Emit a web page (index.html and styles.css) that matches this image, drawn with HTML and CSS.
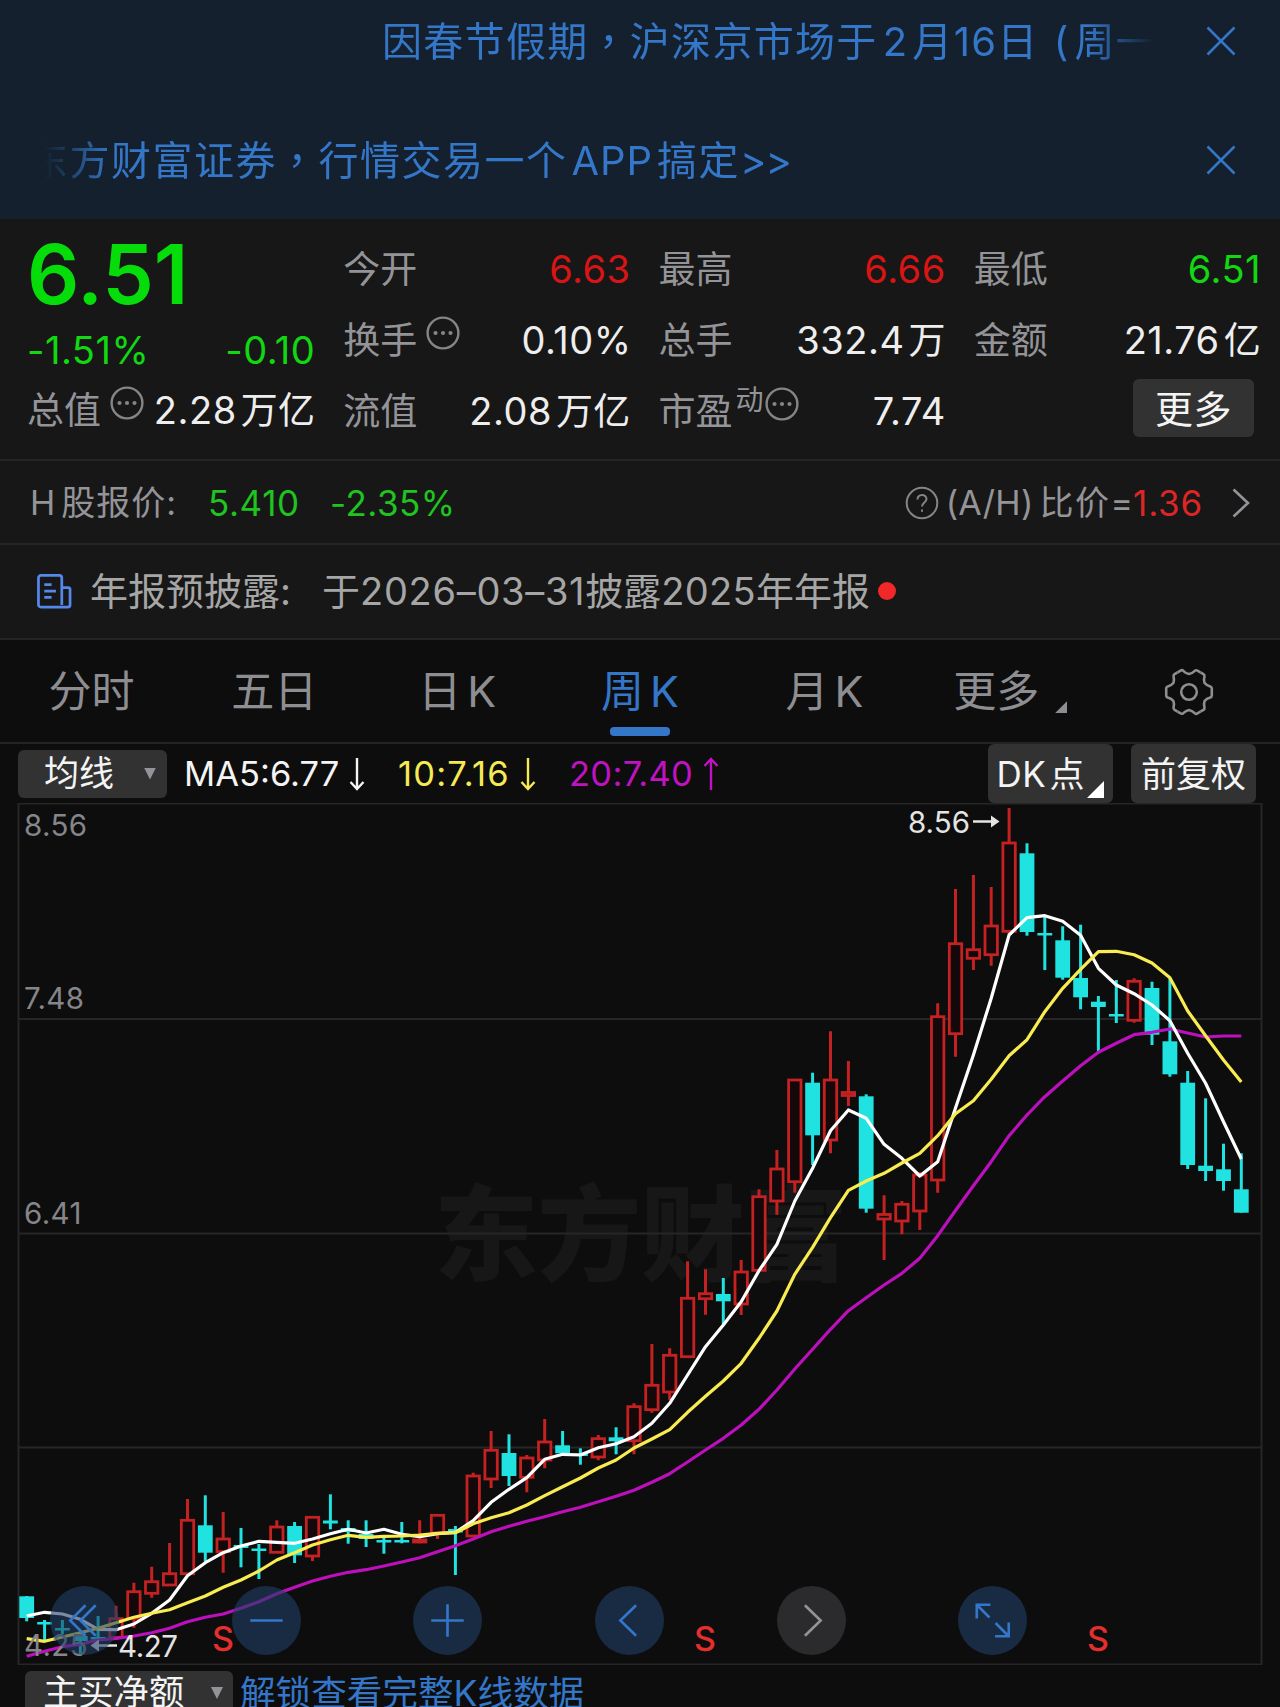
FILE: index.html
```html
<!DOCTYPE html>
<html lang="zh-CN">
<head>
<meta charset="utf-8">
<title>周K行情</title>
<link rel="stylesheet" href="styles.css">
</head>
<body>
<header class="notices">
  <div class="notice">
    <div class="notice-view fade-right"><p class="notice-text first">因春节假期<span class="tc" lang="zh-TW">，</span>沪深京市场于<span class="n1">2</span>月<span class="n2">16</span>日<span class="n3">(</span>周一</p></div>
    <svg class="close" viewBox="0 0 30 30"><path d="M1.5 1.5 28.500 28.500M28.500 1.500 1.500 28.500"/></svg>
  </div>
  <div class="notice second-row">
    <div class="notice-view fade-left"><p class="notice-text second">东方财富证券<span class="tc" lang="zh-TW">，</span>行情交易一个<span class="app">APP</span>搞定<span class="gt">&gt;&gt;</span></p></div>
    <svg class="close" viewBox="0 0 30 30"><path d="M1.500 1.500 28.500 28.500M28.500 1.500 1.500 28.500"/></svg>
  </div>
</header>

<section class="quote">
  <div class="col lead">
    <div class="price">6.51</div>
    <div class="cell change"><span class="value down">-1.51%</span><span class="value down">-0.10</span></div>
    <div class="cell"><span class="label">总值</span><svg class="dots" viewBox="0 0 34 34"><circle class="ring" cx="17" cy="17" r="15.400"/><circle cx="9.500" cy="17" r="2.100"/><circle cx="17" cy="17" r="2.100"/><circle cx="24.500" cy="17" r="2.100"/></svg><span class="value">2.28<i>万亿</i></span></div>
  </div>
  <div class="col">
    <div class="cell"><span class="label">今开</span><span class="value up">6.63</span></div>
    <div class="cell"><span class="label">换手</span><svg class="dots" viewBox="0 0 34 34"><circle class="ring" cx="17" cy="17" r="15.400"/><circle cx="9.500" cy="17" r="2.100"/><circle cx="17" cy="17" r="2.100"/><circle cx="24.500" cy="17" r="2.100"/></svg><span class="value percent">0.10%</span></div>
    <div class="cell"><span class="label">流值</span><span class="value">2.08<i>万亿</i></span></div>
  </div>
  <div class="col">
    <div class="cell"><span class="label">最高</span><span class="value up">6.66</span></div>
    <div class="cell"><span class="label">总手</span><span class="value">332.4<i>万</i></span></div>
    <div class="cell"><span class="label">市盈</span><span class="sup">动</span><svg class="dots tight" viewBox="0 0 34 34"><circle class="ring" cx="17" cy="17" r="15.400"/><circle cx="9.500" cy="17" r="2.100"/><circle cx="17" cy="17" r="2.100"/><circle cx="24.500" cy="17" r="2.100"/></svg><span class="value">7.74</span></div>
  </div>
  <div class="col">
    <div class="cell"><span class="label">最低</span><span class="value down">6.51</span></div>
    <div class="cell"><span class="label">金额</span><span class="value">21.76<i>亿</i></span></div>
    <div class="cell"><button class="more">更多</button></div>
  </div>
</section>

<section class="hshare">
  <span class="h-label"><b>H</b>股报价:</span>
  <span class="h-price">5.410</span>
  <span class="h-change">-2.35%</span>
  <span class="ratio"><svg class="question" viewBox="0 0 34 34"><circle cx="17" cy="17" r="15.300"/><path d="M12.500 13.500c0-6 9-6 9-.5 0 3.500-4.500 3.500-4.500 7.500M17 23.500v2.200"/></svg><span class="ah">(A/H)</span><span class="bj">比价</span><span class="eq">=</span><span class="ratio-value">1.36</span></span>
  <svg class="chevron" viewBox="0 0 18 30"><path d="M1.500 1.500 16 15 1.500 28.500"/></svg>
</section>

<section class="disclosure">
  <svg class="doc" viewBox="0 0 36 36"><path d="M26 34H4a2.500 2.500 0 0 1-2.500-2.500V4A2.500 2.500 0 0 1 4 1.500h19A2.500 2.500 0 0 1 25.500 4v28M25.500 14h6.500a2 2 0 0 1 2 2v15.500A2.500 2.500 0 0 1 31.500 34H25M7.500 11h7.500M7.500 17.500h12M7.500 24h7.500"/></svg>
  <span class="d-title">年报预披露:</span>
  <span class="d-text">于<span class="date">2026–03–31</span>披露<span class="year">2025</span>年年报</span>
  <span class="red-dot"></span>
</section>

<nav class="tabs">
  <a class="tab">分时</a>
  <a class="tab">五日</a>
  <a class="tab">日<b>K</b></a>
  <a class="tab active">周<b>K</b></a>
  <a class="tab month">月<b>K</b></a>
  <a class="tab wide">更多<span class="corner"></span></a>
  <a class="tab"><svg class="gear" viewBox="-25 -25 50 50"><defs><path id="tooth" d="M22.800 0V3.500Q22.800 5 21.200 5.600Q17.500 6.600 15.600 9Q14.500 11.800 15.450 15.600Q15.700 17.200 14.400 18L11.400 19.700"/></defs><use href="#tooth"/><use href="#tooth" transform="rotate(60)"/><use href="#tooth" transform="rotate(120)"/><use href="#tooth" transform="rotate(180)"/><use href="#tooth" transform="rotate(240)"/><use href="#tooth" transform="rotate(300)"/><circle r="7.800"/></svg></a>
</nav>

<section class="indicator">
  <button class="select">均线<span class="caret"></span></button>
  <span class="ma m5">MA5:6.77<svg class="arr" viewBox="0 0 16 34"><path d="M8 1v31M1.500 25 8 32l6.500-7"/></svg></span>
  <span class="ma m10">10:7.16<svg class="arr" viewBox="0 0 16 34"><path d="M8 1v31M1.500 25 8 32l6.500-7"/></svg></span>
  <span class="ma m20">20:7.40<svg class="arr" viewBox="0 0 16 34"><path d="M8 33V2M1.500 9 8 2l6.500 7"/></svg></span>
  <button class="tool dk"><span class="dkl">DK</span>点<span class="dk-corner"></span></button>
  <button class="tool">前复权</button>
</section>

<section class="chart">
  <svg class="plot" viewBox="0 803 1280 862">
    <g class="watermark"><text x="434" y="1273" textLength="414">东方财富</text></g>
    <path class="grid" d="M18.500 803.500H1261.500V1664.500H18.500ZM18.500 1019H1261.500M18.500 1233.500H1261.500M18.500 1447.500H1261.500"/>
    <g id="candles"></g>
    <g id="averages"></g>
    <g class="axis"><text x="24" y="836">8.56</text><text x="24" y="1009">7.48</text><text x="24" y="1224">6.41</text><text x="24" y="1656">4.25</text></g>
    <g class="mark"><text x="908" y="833" textLength="62">8.56</text><text x="118" y="1657" textLength="60">4.27</text><path class="mark-line" d="M973 821.500H992M117 1645.500H98"/><path d="M991 815.500v12l8.500-6zM99 1639.500v12l-8.500-6z"/></g>
    <g class="signal"><text x="223" y="1651">S</text><text x="705" y="1651">S</text><text x="1098" y="1651">S</text></g>
  </svg>
  <div class="controls">
    <button class="round"><svg viewBox="0 0 68 68"><path d="M35 19 20 34 35 49M45 19 30 34 45 49"/></svg></button>
    <button class="round"><svg viewBox="0 0 68 68"><path d="M18 34H50"/></svg></button>
    <button class="round"><svg viewBox="0 0 68 68"><path d="M18 34H50M34 18V50"/></svg></button>
    <button class="round"><svg viewBox="0 0 68 68"><path d="M40.500 19 25 34 40.500 49"/></svg></button>
    <button class="round off"><svg viewBox="0 0 68 68"><path d="M27.500 19 43 34 27.500 49"/></svg></button>
    <button class="round"><svg viewBox="0 0 68 68"><path d="M18.500 32V18.500H32M18.500 18.500 31 31M36.500 49.500H50V36M50 49.500 37 36.500"/></svg></button>
  </div>
</section>

<footer class="sub">
  <button class="sub-select">主买净额<span class="caret"></span></button>
  <a class="unlock">解锁查看完整<span class="uk">K</span>线数据</a>
</footer>
<script src="chart.js"></script>
</body>
</html>
```
FILE: styles.css
```css
* { box-sizing: border-box; }
body { margin: 0; width: 1280px; height: 1707px; overflow: hidden; background: #0d0d0d; color: #eee; font-family: Inter, "Noto Sans CJK SC", sans-serif; font-weight: 400; }
button { border: 0; margin: 0; padding: 0; font: inherit; color: inherit; background: #323232; }
svg { display: block; flex: none; fill: none; }
p { margin: 0; }
i, b { font-style: normal; font-weight: 400; }

.notices { height: 219px; background: #14202d; color: #3476c8; }
.notice { display: flex; justify-content: space-between; align-items: center; height: 82px; padding: 0 44px 0 44px; }
.second-row { margin-top: 37px; }
.notice-view { width: 1110px; margin-top: -1px; overflow: hidden; }
.notice-text { white-space: nowrap; font-size: 40px; line-height: 60px; letter-spacing: 1.3px; }
.fade-right { -webkit-mask-image: linear-gradient(90deg, #000 94%, transparent 100%); mask-image: linear-gradient(90deg, #000 94%, transparent 100%); }
.fade-left { -webkit-mask-image: linear-gradient(90deg, transparent 0, #000 6%); mask-image: linear-gradient(90deg, transparent 0, #000 6%); }
.first { padding-left: 338px; }
.second { margin-left: -16px; letter-spacing: 1.5px; }
.tc { font-family: "Noto Sans CJK TC", sans-serif; }
.n1 { margin: 0 4px 0 5px; }
.n3 { margin: 0 5px 0 15px; }
.app { margin: 0 4px 0 4px; letter-spacing: .9px; }
.gt { letter-spacing: -.8px; }
.close { width: 30px; height: 30px; stroke: #3476c8; stroke-width: 2.5; }

.quote { display: flex; gap: 29px; height: 242px; padding: 13px 20px 0 28px; background: #171717; border-bottom: 2px solid #242424; font-size: 37px; }
.col { flex: 1; padding-top: 1px; }
.cell { display: flex; align-items: center; height: 71px; line-height: 71px; white-space: nowrap; }
.label { padding-top: 2px; color: #949498; }
.lead .label { margin-left: -1px; }
.value { margin-left: auto; margin-right: -1px; padding-top: 1px; font-size: 38px; letter-spacing: .5px; }
.value i { margin-left: 4px; font-size: 37px; letter-spacing: .3px; }
.percent { margin-right: -2px; }
.up { color: #d81414; }
.down { color: #12d812; }
.price { height: 81px; margin-left: -1px; line-height: 85px; font-size: 82px; font-weight: 600; color: #05dc0a; }
.lead .change { justify-content: space-between; height: 61px; padding-top: 13px; }
.change .value:first-child { margin-left: -1px; }
.lead { padding-top: 0; }
.dots { width: 34px; height: 34px; margin: 0 0 13px 9px; fill: #858589; }
.dots .ring { fill: none; stroke: #858589; stroke-width: 2.4; }
.dots.tight { margin-left: 1px; }
.sup { margin: 0 0 20px 3px; font-size: 28px; color: #949498; }
.more { width: 121px; height: 58px; margin: -5px 6px 0 auto; border-radius: 6px; line-height: 60px; font-size: 38px; letter-spacing: .5px; color: #f4f4f4; }

.hshare { display: flex; align-items: center; height: 84px; line-height: 84px; padding: 1px 30px 0 30px; background: #171717; border-bottom: 2px solid #242424; font-size: 34px; color: #949498; white-space: nowrap; }
.h-label { width: 178px; letter-spacing: 1px; }
.h-label b { margin-right: 5px; }
.h-price { width: 122px; font-size: 35px; letter-spacing: .6px; color: #1fc41f; }
.h-change { font-size: 35px; letter-spacing: .5px; color: #1fc41f; }
.ratio { display: flex; align-items: center; margin-left: auto; }
.question { width: 34px; height: 34px; margin-right: 7px; stroke: #858589; stroke-width: 2; }
.ah { letter-spacing: .3px; }
.bj { margin-left: 6px; letter-spacing: 1.5px; }
.ratio-value { font-size: 35px; letter-spacing: .8px; color: #dc2626; }
.chevron { width: 18px; height: 30px; margin-left: 29px; stroke: #949498; stroke-width: 2.6; }

.disclosure { display: flex; align-items: center; height: 95px; line-height: 93px; padding: 0 36px; background: #171717; border-bottom: 2px solid #242424; font-size: 38px; color: #a6a6a6; white-space: nowrap; }
.doc { width: 35px; height: 35px; margin: 0 18px 0 1px; stroke: #5688ec; stroke-width: 2.8; }
.d-title { width: 232px; }
.date { letter-spacing: .7px; }
.year { letter-spacing: .3px; }
.red-dot { width: 18px; height: 18px; margin: 0 0 1px 8px; border-radius: 50%; background: #f02828; }

.tabs { display: grid; grid-template-columns: repeat(7, 1fr); height: 104px; line-height: 103px; border-bottom: 2px solid #242424; font-size: 43px; color: #8e8e92; }
.tab { position: relative; display: flex; align-items: center; justify-content: center; }
.tab b { margin-left: 6px; }
.month { padding-left: 3px; }
.wide { padding-left: 9px; }
.active { color: #3476c8; }
.active::after { content: ""; position: absolute; left: 61px; bottom: 7px; width: 60px; height: 9px; border-radius: 4px; background: #3476c8; }
.corner { width: 12px; height: 12px; margin: 31px 0 0 16px; background: #8e8e92; clip-path: polygon(100% 0, 100% 100%, 0 100%); }
.gear { width: 50px; height: 50px; stroke: #8e8e92; stroke-width: 2.6; }

.indicator { display: flex; align-items: center; height: 59px; line-height: 60px; padding: 0 24px 0 18px; font-size: 35px; white-space: nowrap; }
.select { display: flex; align-items: center; justify-content: space-between; width: 149px; height: 48px; padding: 0 11px 0 26px; border-radius: 6px; line-height: 49px; color: #f4f4f4; }
.caret { width: 12px; height: 12px; background: #949498; clip-path: polygon(0 0, 100% 0, 50% 100%); }
.ma { display: flex; align-items: center; font-size: 34.500px; }
.m5 { width: 214px; margin-left: 17px; color: #f4f4f4; }
.m10 { width: 171px; letter-spacing: 1.2px; color: #f5ea55; }
.m20 { letter-spacing: .3px; color: #c012c0; }
.arr { width: 16px; height: 34px; margin-left: 10px; stroke: currentColor; stroke-width: 2.4; }
.tool { width: 125px; height: 59px; margin-left: 18px; border-radius: 6px; color: #f4f4f4; }
.dk { position: relative; margin-left: auto; padding-right: 20px; }
.dkl { margin-right: 3px; letter-spacing: .5px; }
.dk-corner { position: absolute; right: 9px; bottom: 5px; width: 17px; height: 17px; background: #fff; clip-path: polygon(100% 0, 100% 100%, 0 100%); }

.chart { position: relative; height: 862px; }
.plot { width: 1280px; height: 862px; }
.watermark { fill: #171717; font: 900 104px "Noto Sans CJK SC", sans-serif; }
.grid { stroke: #262626; stroke-width: 2; }
.up-wick { stroke: #c42222; stroke-width: 3; }
.up-body { stroke: #c42222; stroke-width: 2.8; fill: #14080a; }
.down-wick { stroke: #20e2e0; stroke-width: 3; }
.down-body { fill: #20e2e0; }
.line { stroke-width: 3.2; stroke-linejoin: round; }
.line20 { stroke: #bc10bc; }
.line10 { stroke: #f8ec50; }
.line5 { stroke: #fff; }
.axis { fill: #85858a; font-size: 29.500px; letter-spacing: .4px; }
.mark { fill: #e4e4e4; font-size: 29.500px; }
.mark-line { stroke: #e4e4e4; stroke-width: 2.5; }
.signal { fill: #e52e2e; font-size: 34px; font-weight: 500; text-anchor: middle; }
.controls { position: absolute; left: 50px; top: 783px; display: flex; gap: 112.700px; }
.round { width: 69px; height: 69px; border-radius: 50%; background: rgba(32, 64, 102, .6); stroke: #3476c8; stroke-width: 2.6; }
.off { background: #2b2b2d; stroke: #949498; }

.sub { display: flex; align-items: flex-start; gap: 7px; height: 42px; padding: 6px 25px 0; overflow: hidden; font-size: 35.600px; white-space: nowrap; }
.sub-select { display: flex; align-items: center; justify-content: space-between; flex: none; width: 208px; height: 44px; padding: 0 10px 0 18px; border-radius: 6px 6px 0 0; font-size: 35.300px; line-height: 46px; color: #f4f4f4; }
.unlock { line-height: 46px; color: #3476c8; }
```
FILE: chart.js
```javascript
// One row per week: direction, high, body top, body bottom, low (canvas y).
const weeks = `d 1596 1596.3 1618 1621.3
d 1620 1622 1624.500 1640.7
d 1620 1628 1630.500 1634
d 1632 1636 1641 1655.500
d 1616 1637 1639.500 1639.500
u 1605.7 1618.7 1637.500 1640
u 1582.7 1591.7 1618.3 1627.7
u 1566.7 1581.7 1593.3 1597.7
u 1543 1573.7 1585 1585
u 1499 1520.3 1573.7 1573.7
d 1495.3 1525.3 1552.7 1561.7
u 1512 1539 1551.7 1572.7
d 1528 1545 1548 1567.3
d 1544 1548.500 1551 1579
u 1520.3 1527 1552.3 1552.3
d 1522 1526 1555.3 1563
u 1517.3 1517.3 1556 1561
d 1494.3 1520.500 1523.500 1529.3
d 1520.3 1528 1532 1543.7
d 1520.3 1534 1539 1547
d 1537 1540 1542.500 1553.7
d 1522 1540 1542.500 1543.3
u 1520.3 1540 1542 1543.3
u 1515.3 1515.3 1533 1539
d 1526 1529 1532.500 1575
u 1472.7 1476 1536 1536
u 1431 1450.3 1479 1488
d 1434.3 1453 1476 1486
u 1455 1458 1477.3 1492.3
u 1419 1442 1460 1468.3
d 1431 1445.3 1453.3 1454
d 1448.3 1453.500 1456 1464.7
u 1435 1438.7 1457 1460.3
d 1427.3 1437.3 1441.3 1454.3
u 1403.3 1406.7 1440.7 1454.3
u 1344 1385.3 1409.7 1412.7
u 1348.3 1355.3 1392 1400
u 1261.3 1298.3 1356.7 1356.7
u 1269.3 1293.7 1298.7 1314.7
d 1278 1294 1301.3 1324
u 1260 1272 1304 1315
u 1189.3 1196.7 1270.3 1270.3
u 1150 1169 1201 1214.7
u 1080 1080 1181.7 1192.7
d 1072.7 1082.7 1135.3 1165
u 1031.3 1080 1140 1153.3
u 1061 1092.500 1095.500 1106
d 1094.3 1096.3 1208.7 1212.7
u 1195.3 1214.500 1219 1260
u 1201 1204.3 1221 1234.3
u 1172 1175 1211 1230
u 1003.3 1016.7 1180 1192.7
u 889 943.7 1033.7 1056.7
u 875 949.7 958.3 970
u 887 926 954.7 965.7
u 808 843 931.3 934
d 843.3 853.3 932 935.7
d 916.7 933 935.500 970
d 926.3 940.3 977.7 979.7
d 924.7 978 997.3 1009.3
d 996 1001.7 1007 1051.7
d 980 1014 1016.500 1023
u 978.3 981.3 1020.3 1022.7
d 981.7 988 1034.7 1045
d 978.3 1041.3 1074.3 1076.7
d 1071 1082.7 1165 1169
d 1098.3 1165.7 1171 1181
d 1143.7 1169.3 1181 1190.7
d 1153.3 1189.3 1212.7 1212.7`.split('\n').map(r => r.split(' '));

const averages = {
  line20: [1656.3,1651.3,1646.7,1644.3,1640,1638.3,1636,1632.7,1628.3,1621.7,1617.3,1614,1608.3,1601.7,1593.7,1587.3,1581,1576.3,1572.3,1569.7,1566,1562,1557.7,1551.7,1545.7,1539,1531.7,1526.3,1521.3,1516.7,1511.7,1507.3,1501.7,1496.3,1490.3,1482.3,1473.7,1462,1450,1438.3,1425,1409.3,1390,1369,1349.3,1329.3,1310.7,1297.7,1285,1273.3,1258.3,1235.7,1210.500,1185.7,1161.7,1135.7,1115,1096.7,1081,1065.7,1052.3,1043.3,1034.7,1032.3,1029,1033,1037,1036,1036],
  line5: [1616,1612.3,1614,1619.3,1629.3,1629.7,1624,1613.3,1600,1575.7,1562.7,1552.7,1546,1541.3,1542.3,1543.3,1539,1533.7,1529.3,1533,1529.3,1534.3,1536.7,1533.7,1532.3,1520.7,1502.3,1489.3,1477.7,1459.3,1454.3,1455,1447.7,1443.7,1436.7,1423.3,1403.3,1375,1346.7,1325,1301.7,1270.7,1244.3,1201,1168.3,1130.7,1110,1118.3,1144.3,1158.3,1176,1161.7,1108,1055,998.3,935,917.7,915.7,921.3,935.3,968.3,985,993.7,1005,1020.7,1053.3,1083.3,1121.7,1159],
  line10: [1638.7,1641.3,1637,1632.7,1628.3,1622.7,1617.3,1613.3,1609.7,1602.7,1596,1587.3,1580,1571,1560,1552.7,1545,1539.7,1535.3,1537.3,1536.3,1536,1535,1533.3,1532.7,1523.7,1517.7,1512.7,1505,1495.7,1486.7,1478,1468,1460,1448,1439,1429.7,1412.3,1396.3,1381,1363.3,1338.3,1311,1274.3,1247.3,1217.7,1190.3,1181,1173.3,1163,1153.3,1135.7,1113.7,1100.7,1079.3,1055.7,1039.7,1011.7,988.3,969.3,951.7,951.3,954.7,963,977.7,1011,1035.7,1060,1082]
};

const x = i => (26.7 + i * 17.862).toFixed(1);

document.getElementById('candles').innerHTML = weeks.map(([kind, high, top, bottom, low], i) => {
  const cx = x(i), h = bottom - top;
  if (kind === 'd') {
    return `<path class="down-wick" d="M${cx} ${high}V${low}"/><rect class="down-body" x="${cx - 7.4}" y="${top}" width="14.800" height="${h}"/>`;
  }
  return `<path class="up-wick" d="M${cx} ${high}V${top}M${cx} ${bottom}V${low}"/><rect class="up-body" x="${cx - 6.2}" y="${top}" width="12.400" height="${h}"/>`;
}).join('');

document.getElementById('averages').innerHTML = Object.entries(averages).map(([name, ys]) =>
  `<polyline class="line ${name}" points="${ys.map((y, i) => x(i) + ',' + y).join(' ')}"/>`).join('');
```
